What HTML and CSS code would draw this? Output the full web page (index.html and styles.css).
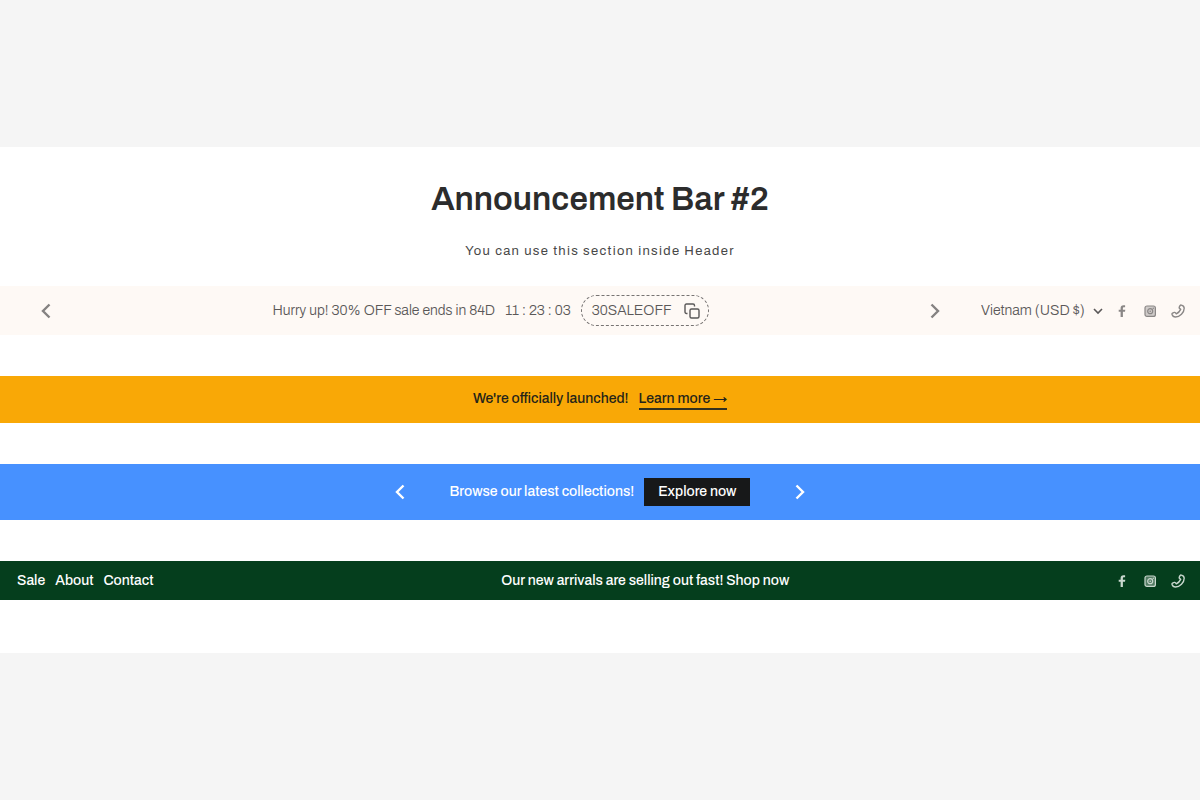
FILE: index.html
```html
<!DOCTYPE html>
<html lang="en">
<head>
<meta charset="utf-8">
<title>Announcement Bar #2</title>
<link rel="stylesheet" href="styles.css">
</head>
<body>
<svg class="sprite" aria-hidden="true">
  <symbol id="left" viewBox="0 0 16 16"><path d="M11.500 1.500 5 8l6.500 6.500" fill="none" stroke="currentColor" stroke-width="2.400"/></symbol>
  <symbol id="right" viewBox="0 0 16 16"><path d="M4.500 1.500 11 8l-6.500 6.500" fill="none" stroke="currentColor" stroke-width="2.400"/></symbol>
  <symbol id="facebook" viewBox="0 0 14 14"><path d="M5.600 13V7.800H3.700V5.700h1.900V4.200C5.600 2.300 6.600 1.200 8.500 1.200h1.600v2H9c-.8 0-1.100.4-1.100 1.100v1.400H10.300l-.3 2.100H7.900V13z" fill="currentColor"/></symbol>
  <symbol id="instagram" viewBox="0 0 14 14"><rect x="2" y="2" width="10.400" height="10.400" rx="2" fill="currentColor" fill-opacity=".4" stroke="currentColor" stroke-width="1.200"/><circle cx="7.200" cy="7.200" r="2.500" fill="none" stroke="currentColor" stroke-width="1.200"/><circle cx="7.200" cy="7.200" r=".8" fill="currentColor"/><circle cx="10.300" cy="4.200" r=".7" fill="currentColor"/></symbol>
  <symbol id="phone" viewBox="0 0 14 14"><path d="M10.300 1.100c1.700.4 2.900 1.500 2.900 3.200 0 4.300-4.400 8.700-8.700 8.700-1.700 0-3-1.200-3.500-2.800-.1-.4.100-.8.500-1l1.900-.8c.4-.1.800 0 1 .3l.9 1.200c2-1 3.500-2.600 4.400-4.500L8.500 4.400c-.3-.2-.4-.6-.3-1L9 1.600c.3-.4.800-.6 1.300-.5z" fill="none" stroke="currentColor" stroke-width="1.400" stroke-linejoin="round"/></symbol>
</svg>
<main class="showcase">
  <header class="intro">
    <h1 class="title">Announcement Bar #2</h1>
    <p class="subtitle">You can use this section inside Header</p>
  </header>

  <section class="bar bar-cream">
    <div class="slider">
      <button class="arrow" aria-label="Previous"><svg><use href="#left"/></svg></button>
      <div class="message">
        <span>Hurry up! 30% OFF sale ends in 84D</span>
        <span class="timer">11 : 23 : 03</span>
        <button class="coupon">30SALEOFF
          <svg viewBox="0 0 16 16"><rect x="6" y="6" width="9" height="9" rx="1.500" fill="none" stroke="currentColor" stroke-width="1.400"/><path d="M3.500 10.500H2.400C1.600 10.500 1 9.900 1 9.100V2.400C1 1.600 1.600 1 2.400 1h6.700c.8 0 1.400.6 1.400 1.400v1.100" fill="none" stroke="currentColor" stroke-width="1.400"/></svg>
        </button>
      </div>
      <button class="arrow" aria-label="Next"><svg><use href="#right"/></svg></button>
    </div>
    <div class="tools">
      <label class="country">
        <select class="country-select" aria-label="Country and currency"><option>Vietnam (USD $)</option></select>
        <svg viewBox="0 0 10 10"><path d="m1 3 4 4 4-4" fill="none" stroke="currentColor" stroke-width="1.600"/></svg>
      </label>
      <nav class="social" aria-label="Social">
        <a href="#" aria-label="Facebook"><svg><use href="#facebook"/></svg></a>
        <a href="#" aria-label="Instagram"><svg><use href="#instagram"/></svg></a>
        <a href="#" aria-label="Phone"><svg><use href="#phone"/></svg></a>
      </nav>
    </div>
  </section>

  <section class="bar bar-orange">
    <div class="message">
      <span>We're officially launched!</span>
      <a class="learn" href="#">Learn more →</a>
    </div>
  </section>

  <section class="bar bar-blue">
    <div class="promo">
      <button class="arrow" aria-label="Previous"><svg><use href="#left"/></svg></button>
      <div class="message">
        <span>Browse our latest collections!</span>
        <button class="explore">Explore now</button>
      </div>
      <button class="arrow" aria-label="Next"><svg><use href="#right"/></svg></button>
    </div>
  </section>

  <section class="bar bar-green">
    <nav class="links" aria-label="Pages">
      <a href="#">Sale</a>
      <a href="#">About</a>
      <a href="#">Contact</a>
    </nav>
    <a class="arrivals" href="#">Our new arrivals are selling out fast! Shop now</a>
    <nav class="social" aria-label="Social">
      <a href="#" aria-label="Facebook"><svg><use href="#facebook"/></svg></a>
      <a href="#" aria-label="Instagram"><svg><use href="#instagram"/></svg></a>
      <a href="#" aria-label="Phone"><svg><use href="#phone"/></svg></a>
    </nav>
  </section>
</main>
</body>
</html>
```

FILE: styles.css
```css
* { box-sizing: border-box; }
body {
  margin: 0;
  min-height: 100vh;
  display: flex;
  flex-direction: column;
  justify-content: center;
  background: #f5f5f5;
  color: #2c2c2c;
  font-family: Archivo, "Liberation Sans", Arial, sans-serif;
  font-size: 14px;
  line-height: 20px;
}
a { color: inherit; text-decoration: none; }
button, select {
  font: inherit;
  color: inherit;
  background: none;
  border: 0;
  padding: 0;
  cursor: pointer;
}
svg { display: block; }
.sprite { position: absolute; width: 0; height: 0; }

.showcase { background: #fff; padding: 32px 0 53px; }
.intro { text-align: center; padding-bottom: 25px; }
.title { margin: 0 0 22px; font-size: 33px; line-height: 40px; font-weight: 550; }
.subtitle { margin: 0; font-size: 13px; letter-spacing: 0.1em; color: #484848; }

.bar { display: flex; align-items: center; font-size: 14px; font-weight: 500; }
.bar + .bar { margin-top: 41px; }
.message { display: flex; align-items: center; gap: 10px; }
.arrow svg { width: 16px; height: 16px; }

.bar-cream {
  background: #fef9f5;
  color: #5a5858;
  padding: 9px 15px 9px 38px;
  font-weight: 350;
}
.bar-cream .arrow { color: #858281; }
.slider { flex: 1; display: flex; align-items: center; justify-content: space-between; }
.coupon {
  display: flex;
  align-items: center;
  gap: 12px;
  padding: 5px 8px 4px 10px;
  border: 1px dashed #777473;
  border-radius: 16px;
}
.coupon svg { width: 16px; height: 16px; }
.tools { display: flex; align-items: center; gap: 12px; margin-left: 38px; }
.country { display: flex; align-items: center; gap: 8px; }
.country-select { appearance: none; }
.country svg { width: 10px; height: 10px; }
.social { display: flex; gap: 14px; }
.social svg { width: 14px; height: 14px; }
.bar-cream .social { color: #8a8786; }

.bar-orange { background: #f9a806; color: #242319; justify-content: center; padding: 13px 0; }
.bar-orange .message { align-items: baseline; }
.learn { line-height: 18px; border-bottom: 2px solid #34311d; }

.bar-blue { background: #4791ff; color: #fff; justify-content: center; padding: 14px 0; }
.promo { display: flex; align-items: center; gap: 42px; }
.explore { background: #171819; padding: 4px 14px; }

.bar-green {
  background: #053e1d;
  color: #fff;
  justify-content: space-between;
  padding: 10px 15px 9px 17px;
}
.links { display: flex; gap: 10px; }
.arrivals { padding-left: 22px; }
.bar-green .social { color: #c9d8ce; }
```
